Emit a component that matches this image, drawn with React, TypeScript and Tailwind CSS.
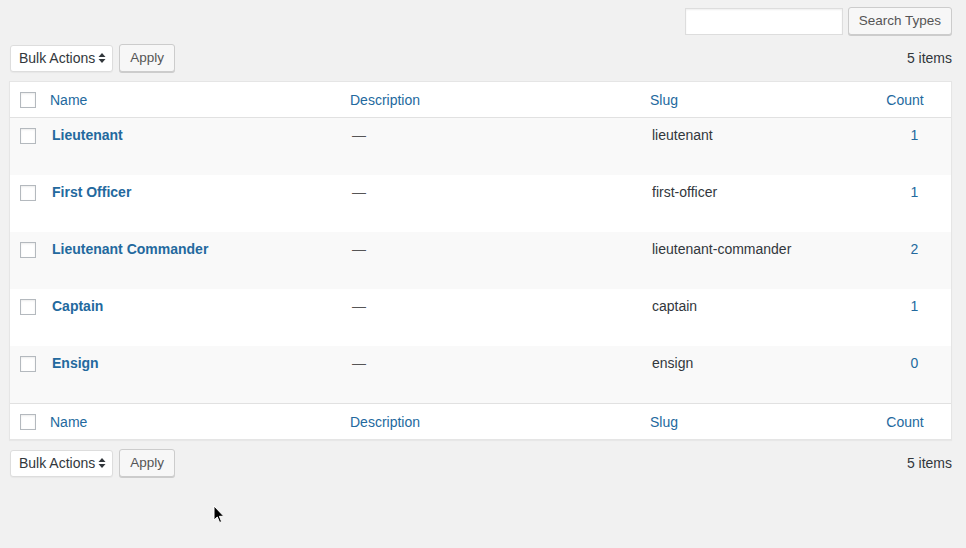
import React from "react";

type Term = { name: string; slug: string; count: number };

const TERMS: Term[] = [
  { name: "Lieutenant", slug: "lieutenant", count: 1 },
  { name: "First Officer", slug: "first-officer", count: 1 },
  { name: "Lieutenant Commander", slug: "lieutenant-commander", count: 2 },
  { name: "Captain", slug: "captain", count: 1 },
  { name: "Ensign", slug: "ensign", count: 0 },
];

const COLS = "grid grid-cols-[30px_300px_300px_230px_1fr]";

function Check() {
  return <span className="block w-4 h-4 bg-white border border-[#b4b9be] shadow-[inset_0_1px_2px_rgba(0,0,0,0.08)]" />;
}

function BulkBar() {
  return (
    <div className="flex items-center h-7">
      <div className="flex items-center h-[27px] pl-2 pr-1.5 bg-white border border-[#dddddd] rounded-[3px] text-[14px] text-[#32373c] shadow-[0_1px_1px_rgba(0,0,0,0.04)]">
        <span>Bulk Actions</span>
        <svg width="8" height="12" viewBox="0 0 8 12" className="ml-[3px]">
          <path d="M4 1 L7.5 5 L0.5 5 Z" fill="#32373c" />
          <path d="M4 11 L7.5 7 L0.5 7 Z" fill="#32373c" />
        </svg>
      </div>
      <button className="ml-[6px] h-7 px-[10px] bg-[#f7f7f7] border border-[#cccccc] rounded-[3px] text-[13.5px] text-[#555555] shadow-[0_1px_0_#cccccc]">
        Apply
      </button>
      <div className="ml-auto text-[14px] text-[#32373c]">5 items</div>
    </div>
  );
}

function HeadRow({ top }: { top?: boolean }) {
  return (
    <div
      className={`${COLS} h-9 items-center pt-[2px] bg-white text-[14px] text-[#23699e] ${
        top ? "border-b border-[#e1e1e1]" : "border-t border-[#e1e1e1]"
      }`}
    >
      <div className="pl-[10px] -mt-[2px]">
        <Check />
      </div>
      <div className="pl-[10px]">Name</div>
      <div className="pl-[10px]">Description</div>
      <div className="pl-[10px]">Slug</div>
      <div className="text-center pr-[11px]">Count</div>
    </div>
  );
}

export default function App() {
  return (
    <div className="relative w-[966px] h-[548px] bg-[#f1f1f1] font-['Liberation_Sans',Arial,sans-serif] overflow-hidden">
      <div className="pl-[10px] pr-[14px] pt-[7px]">
        <div className="flex justify-end items-center gap-[5px]">
          <div className="w-[158px] h-[27px] bg-white border border-[#dddddd] shadow-[inset_0_1px_2px_rgba(0,0,0,0.07)]" />
          <button className="h-[28px] px-[10px] bg-[#f7f7f7] border border-[#cccccc] rounded-[3px] text-[13.5px] text-[#555555] shadow-[0_1px_0_#cccccc]">
            Search Types
          </button>
        </div>
        <div className="mt-[9px]">
          <BulkBar />
        </div>
      </div>

      <div className="ml-[9px] mr-[14px] mt-[9px] border border-[#e5e5e5] shadow-[0_1px_1px_rgba(0,0,0,0.04)] bg-white">
        <HeadRow top />
        {TERMS.map((t, i) => (
          <div
            key={t.slug}
            className={`${COLS} h-[57px] items-start pt-[7px] text-[14px] ${i % 2 === 0 ? "bg-[#f9f9f9]" : "bg-white"}`}
          >
            <div className="pl-[10px] pt-[3px]">
              <Check />
            </div>
            <div className="pl-[12px] font-bold text-[#23699e]">{t.name}</div>
            <div className="pl-[12px] text-[#555555]">—</div>
            <div className="pl-[12px] text-[#32373c]">{t.slug}</div>
            <div className="text-center pl-2 text-[#23699e]">{t.count}</div>
          </div>
        ))}
        <HeadRow />
      </div>

      <div className="pl-[10px] pr-[14px] mt-[9px]">
        <BulkBar />
      </div>

      <svg className="absolute left-[213px] top-[505px]" width="12" height="19" viewBox="0 0 12 19">
        <path d="M1 1 L1 15 L4.3 12 L6.6 17.5 L8.6 16.6 L6.4 11.3 L10.8 11.3 Z" fill="#000" stroke="#fff" strokeWidth="1" strokeLinejoin="round" />
      </svg>
    </div>
  );
}
